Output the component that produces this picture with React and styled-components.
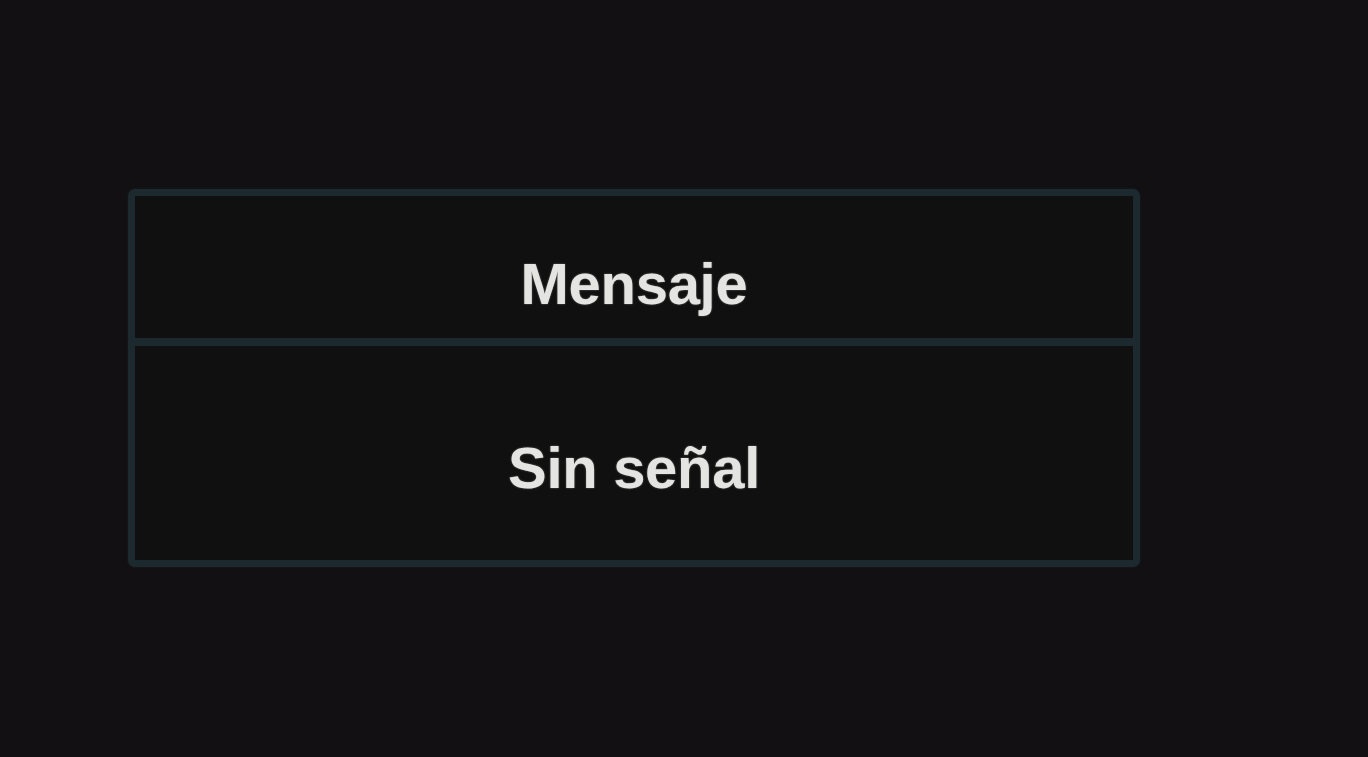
import React from "react";
import styled, { createGlobalStyle } from "styled-components";

const GlobalStyle = createGlobalStyle`
  html, body {
    margin: 0;
    padding: 0;
    background: #121013;
  }
  body {
    font-family: "Liberation Sans", Arial, sans-serif;
  }
`;

const Screen = styled.div`
  width: 1368px;
  height: 757px;
  box-sizing: border-box;
  padding: 189px 0 0 128px;
  background: #121013;
  overflow: hidden;
`;

const Panel = styled.div`
  width: 1012px;
  box-sizing: border-box;
  border: 7px solid #1c2a2f;
  border-radius: 7px;
  background: #0f100f;
  display: flex;
  flex-direction: column;
  box-shadow: 0 0 3px rgba(28, 42, 47, 0.6);
`;

const Cell = styled.div`
  height: ${(p) => p.$height}px;
  box-sizing: border-box;
  padding-top: ${(p) => p.$top}px;
  display: flex;
  justify-content: center;
  border-bottom: ${(p) => (p.$divider ? "8px solid #1c2a2f" : "none")};
`;

const Label = styled.span`
  font-size: 58px;
  line-height: 1;
  font-weight: 700;
  color: #e4e4e2;
  text-shadow: 0 0 2px rgba(228, 228, 226, 0.45);
  letter-spacing: -0.3px;
`;

export default function App() {
  return (
    <>
      <GlobalStyle />
      <Screen>
        <Panel>
          <Cell $height={150} $top={59} $divider>
            <Label>Mensaje</Label>
          </Cell>
          <Cell $height={214} $top={93}>
            <Label>Sin señal</Label>
          </Cell>
        </Panel>
      </Screen>
    </>
  );
}
